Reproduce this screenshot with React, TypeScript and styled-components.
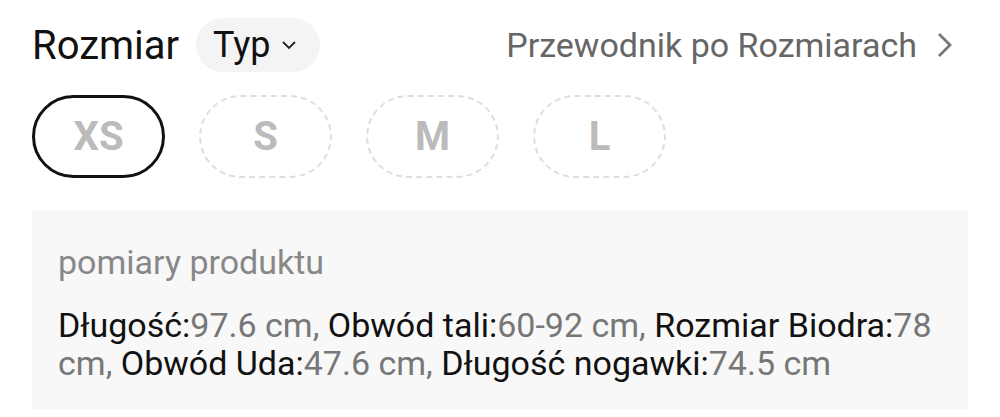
import React from 'react';
import styled, { createGlobalStyle } from 'styled-components';

const GlobalStyle = createGlobalStyle`
    html, body {
        margin: 0;
        padding: 0;
        background: #ffffff;
        font-family: Roboto, "Liberation Sans", sans-serif;
    }
`;

const sizes = [
    { label: 'XS', selected: true },
    { label: 'S', selected: false },
    { label: 'M', selected: false },
    { label: 'L', selected: false },
];

const measures = [
    { name: 'Długość', value: '97.6 cm' },
    { name: 'Obwód tali', value: '60-92 cm' },
    { name: 'Rozmiar Biodra', value: '78 cm' },
    { name: 'Obwód Uda', value: '47.6 cm' },
    { name: 'Długość nogawki', value: '74.5 cm' },
];

function App() {
    return (
        <Wrapper>
            <GlobalStyle />
            <Header>
                <TitleGroup>
                    <Title>Rozmiar</Title>
                    <TypeButton>
                        Typ
                        <svg width="18" height="12" viewBox="0 0 18 12">
                            <path d="M3 3l6 6 6-6" fill="none" stroke="#222" strokeWidth="1.8" />
                        </svg>
                    </TypeButton>
                </TitleGroup>
                <GuideLink>
                    Przewodnik po Rozmiarach
                    <svg width="16" height="26" viewBox="0 0 16 26">
                        <path d="M2 2l11 11-11 11" fill="none" stroke="#777" strokeWidth="2.8" />
                    </svg>
                </GuideLink>
            </Header>
            <SizeRow>
                {sizes.map((s) => (
                    <SizePill key={s.label} $selected={s.selected}>
                        {s.label}
                    </SizePill>
                ))}
            </SizeRow>
            <InfoBox>
                <InfoTitle>pomiary produktu</InfoTitle>
                <InfoText>
                    {measures.map((m, i) => (
                        <React.Fragment key={m.name}>
                            <Key>{m.name}:</Key>
                            <Val>
                                {m.value}
                                {i < measures.length - 1 ? ', ' : ''}
                            </Val>
                        </React.Fragment>
                    ))}
                </InfoText>
            </InfoBox>
        </Wrapper>
    );
}

export default App;

const Wrapper = styled.div`
    width: 1000px;
    height: 417px;
    box-sizing: border-box;
    padding: 18px 32px 0 32px;
    display: flex;
    flex-direction: column;
`;

const Header = styled.div`
    display: flex;
    align-items: center;
    justify-content: space-between;
    height: 54px;
`;

const TitleGroup = styled.div`
    display: flex;
    align-items: center;
    gap: 17px;
`;

const Title = styled.span`
    font-size: 40px;
    color: #111;
`;

const TypeButton = styled.div`
    display: flex;
    align-items: center;
    gap: 9px;
    height: 54px;
    padding: 0 22px 0 17px;
    box-sizing: border-box;
    border-radius: 27px;
    background: #f4f4f4;
    font-size: 36px;
    color: #111;
`;

const GuideLink = styled.div`
    display: flex;
    align-items: center;
    gap: 20px;
    margin-right: 15px;
    font-size: 34px;
    color: #666;
`;

const SizeRow = styled.div`
    display: flex;
    gap: 34px;
    margin-top: 23px;
`;

const SizePill = styled.div<{ $selected: boolean }>`
    width: 133px;
    height: 83px;
    box-sizing: border-box;
    border-radius: 42px;
    border: ${(p) => (p.$selected ? '3px solid #111' : '2px dashed #dedede')};
    display: flex;
    align-items: center;
    justify-content: center;
    font-size: 40px;
    font-weight: 700;
    color: #bbb;
`;

const InfoBox = styled.div`
    margin-top: 32px;
    width: 936px;
    height: 199px;
    box-sizing: border-box;
    background: #f8f8f8;
    padding: 32px 26px 0 26px;
`;

const InfoTitle = styled.div`
    font-size: 34px;
    color: #888;
    line-height: 40px;
`;

const InfoText = styled.div`
    margin-top: 24px;
    font-size: 34px;
    line-height: 38px;
    color: #111;
`;

const Key = styled.span`
    color: #111;
`;

const Val = styled.span`
    color: #777;
`;
